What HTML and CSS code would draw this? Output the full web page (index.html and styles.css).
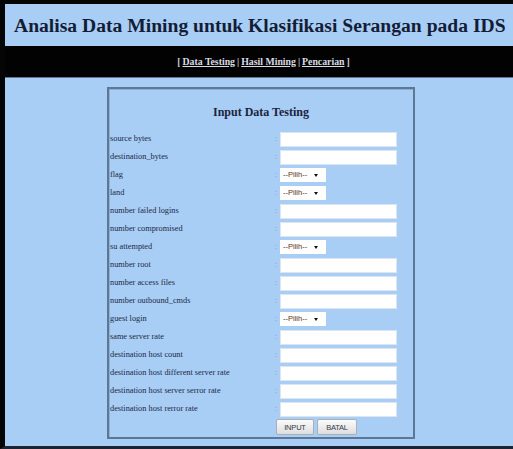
FILE: index.html
```html
<!DOCTYPE html>
<html lang="id">
<head>
<meta charset="utf-8">
<title>Analisa Data Mining untuk Klasifikasi Serangan pada IDS</title>
<link rel="stylesheet" href="styles.css">
</head>
<body>
<div class="page">
  <header class="site-head">
    <h1>Analisa Data Mining untuk Klasifikasi Serangan pada IDS</h1>
  </header>
  <nav class="menu">[<a href="#">Data Testing</a>|<a href="#">Hasil Mining</a>|<a href="#">Pencarian</a>]</nav>
  <main class="content">
    <form class="panel">
      <h2 class="panel-title">Input Data Testing</h2>
      <div class="fields">
        <label class="lbl">source bytes</label><span class="sep">:</span><span class="ctl"><input class="txt" type="text"></span>
        <label class="lbl">destination_bytes</label><span class="sep">:</span><span class="ctl"><input class="txt" type="text"></span>
        <label class="lbl">flag</label><span class="sep">:</span><span class="ctl"><span class="pick"><select><option>--Pilih--</option></select></span></span>
        <label class="lbl">land</label><span class="sep">:</span><span class="ctl"><span class="pick"><select><option>--Pilih--</option></select></span></span>
        <label class="lbl">number failed logins</label><span class="sep">:</span><span class="ctl"><input class="txt" type="text"></span>
        <label class="lbl">number compromised</label><span class="sep">:</span><span class="ctl"><input class="txt" type="text"></span>
        <label class="lbl">su attempted</label><span class="sep">:</span><span class="ctl"><span class="pick"><select><option>--Pilih--</option></select></span></span>
        <label class="lbl">number root</label><span class="sep">:</span><span class="ctl"><input class="txt" type="text"></span>
        <label class="lbl">number access files</label><span class="sep">:</span><span class="ctl"><input class="txt" type="text"></span>
        <label class="lbl">number outbound_cmds</label><span class="sep">:</span><span class="ctl"><input class="txt" type="text"></span>
        <label class="lbl">guest login</label><span class="sep">:</span><span class="ctl"><span class="pick"><select><option>--Pilih--</option></select></span></span>
        <label class="lbl">same server rate</label><span class="sep">:</span><span class="ctl"><input class="txt" type="text"></span>
        <label class="lbl">destination host count</label><span class="sep">:</span><span class="ctl"><input class="txt" type="text"></span>
        <label class="lbl">destination host different server rate</label><span class="sep">:</span><span class="ctl"><input class="txt" type="text"></span>
        <label class="lbl">destination host server serror rate</label><span class="sep">:</span><span class="ctl"><input class="txt" type="text"></span>
        <label class="lbl">destination host rerror rate</label><span class="sep">:</span><span class="ctl"><input class="txt" type="text"></span>
        <div class="actions">
          <button type="button" class="btn">INPUT</button>
          <button type="button" class="btn">BATAL</button>
        </div>
      </div>
    </form>
  </main>
</div>
</body>
</html>
```

FILE: styles.css
```css
html, body {
  margin: 0;
  padding: 0;
  background: #a9cef5;
}

body {
  font-family: "Liberation Serif", "Times New Roman", serif;
  color: #1b2a48;
  overflow: hidden;
}

.page {
  width: 508px;
  height: 442px;
  border-top: 4px solid #050505;
  border-left: 5px solid #050505;
  border-bottom: 3px solid #1c2333;
  background: #a9cef5;
}

/* title band */
.site-head {
  height: 42px;
  background: #a9cef5;
}

.site-head h1 {
  margin: 0;
  padding: 10px 0 0 9px;
  font-size: 19.6px;
  line-height: 24px;
  font-weight: bold;
  color: #141d36;
  white-space: nowrap;
}

/* black menu band */
.menu {
  height: 32px;
  background: #020202;
  border-bottom: 1px solid #62758e;
  text-align: center;
  font-size: 9.8px;
  font-weight: bold;
  line-height: 32px;
  color: #c9cdd4;
  padding-left: 9px;
  box-sizing: border-box;
  white-space: nowrap;
}

.menu a {
  color: #d9dce2;
  text-decoration: underline;
  margin: 0 2px;
}

/* main area */
.content {
  padding-top: 9px;
}

.panel {
  width: 304px;
  margin-left: 102px;
  border: 2px solid #5c7896;
  box-shadow: inset 1px 1px 0 #8fb0d2;
  padding-bottom: 1px;
}

.panel-title {
  margin: 0;
  padding: 16px 0 11px;
  text-align: center;
  font-size: 12px;
  line-height: 14px;
  font-weight: bold;
  color: #1a2440;
}

.fields {
  display: grid;
  grid-template-columns: 166px 5px 1fr;
  grid-auto-rows: 18px;
  align-items: center;
}

.lbl {
  padding-left: 1px;
  font-size: 8.3px;
  line-height: 18px;
  color: #1a2845;
  white-space: nowrap;
}

.sep {
  font-size: 8px;
  color: #7d93ad;
  line-height: 18px;
}

.ctl {
  display: flex;
  align-items: center;
  height: 18px;
}

.txt {
  box-sizing: border-box;
  width: 117px;
  height: 15px;
  margin: 0;
  padding: 0 2px;
  border: 1px solid #dde6f0;
  background: #ffffff;
  outline: none;
}

/* dropdown with a small drawn arrow */
.pick {
  position: relative;
  display: flex;
  align-items: center;
  width: 46px;
  height: 14px;
  background: #ffffff;
}

.pick select {
  appearance: none;
  -webkit-appearance: none;
  display: block;
  box-sizing: border-box;
  width: 100%;
  height: 14px;
  line-height: 14px;
  margin: 0;
  padding: 0 0 0 3px;
  border: none;
  background: transparent;
  font-family: "Liberation Sans", Arial, sans-serif;
  font-size: 7.5px;
  color: #5a2f24;
  outline: none;
}

.pick::after {
  content: "";
  position: absolute;
  right: 8px;
  top: 6px;
  border-left: 2.5px solid transparent;
  border-right: 2.5px solid transparent;
  border-top: 3px solid #111111;
  pointer-events: none;
}

.actions {
  grid-column: 2 / 4;
  display: flex;
  gap: 3px;
  align-items: center;
  height: 18px;
  padding-left: 1px;
}

.btn {
  box-sizing: border-box;
  height: 16px;
  margin: 0;
  padding: 0 4px;
  border: 1px solid #a9b0b8;
  border-radius: 2px;
  background: linear-gradient(#fbfbfb, #dedede);
  font-family: "Liberation Sans", Arial, sans-serif;
  font-size: 7.5px;
  color: #333a44;
  letter-spacing: -0.2px;
}

.btn:first-child {
  width: 38px;
}

.btn:last-child {
  width: 40px;
}
```
